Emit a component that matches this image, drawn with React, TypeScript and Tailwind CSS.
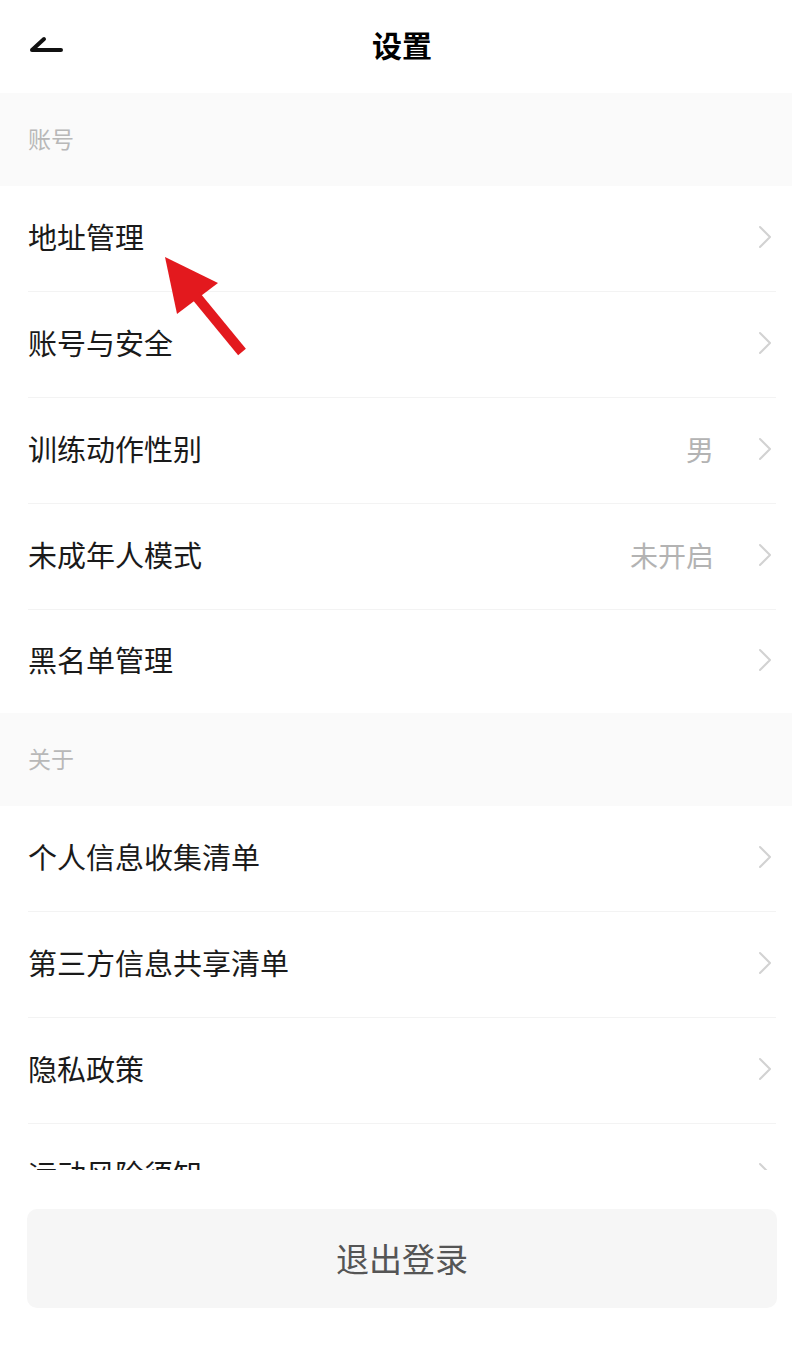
import React from 'react';

type Row = { label: string; value?: string };

const accountRows: Row[] = [
  { label: '地址管理' },
  { label: '账号与安全' },
  { label: '训练动作性别', value: '男' },
  { label: '未成年人模式', value: '未开启' },
  { label: '黑名单管理' },
];

const aboutRows: Row[] = [
  { label: '个人信息收集清单' },
  { label: '第三方信息共享清单' },
  { label: '隐私政策' },
  { label: '运动风险须知' },
];

const Chevron = () => (
  <svg width="14" height="24" viewBox="0 0 14 24" fill="none">
    <path d="M2 2 L12 12 L2 22" stroke="#d2d2d2" strokeWidth="2" strokeLinecap="round" strokeLinejoin="round" />
  </svg>
);

const SectionTitle = ({ title }: { title: string }) => (
  <div className="h-[93px] bg-[#fafafa] flex items-center px-[28px]">
    <span className="text-[23px] text-[#b8b8b8] -mt-[2px]">{title}</span>
  </div>
);

const SettingRow = ({ row, last }: { row: Row; last?: boolean }) => (
  <div className="pl-[28px] pr-[16px] bg-white">
    <div className={`flex items-center ${last ? 'h-[103px]' : 'h-[106px] border-b border-[#f3f3f3]'}`}>
      <span className="flex-1 text-[29px] text-[#1a1a1a] -mt-[3px]">{row.label}</span>
      {row.value && <span className="text-[28px] text-[#b3b3b3] mr-[44px] -mt-[3px]">{row.value}</span>}
      <div className="w-[14px] mr-[4px] flex items-center -mt-[3px]">
        <Chevron />
      </div>
    </div>
  </div>
);

export default function App() {
  return (
    <div
      className="w-[792px] h-[1359px] bg-white flex flex-col relative overflow-hidden"
      style={{ fontFamily: '"Noto Sans CJK SC", "Noto Sans", sans-serif' }}
    >
      <header className="h-[93px] grid grid-cols-[1fr_auto_1fr] items-center px-[28px]">
        <div className="-mt-[4px]">
          <svg width="36" height="20" viewBox="0 0 36 20" fill="none">
            <path d="M4 15 L16 4 M4 15 L33 15" stroke="#111" strokeWidth="4" strokeLinecap="round" />
          </svg>
        </div>
        <h1 className="text-[30px] font-bold text-black ml-[12px] -mt-[5px]">设置</h1>
        <div />
      </header>

      <div className="h-[1077px] overflow-hidden">
        <SectionTitle title="账号" />
        {accountRows.map((r, i) => (
          <SettingRow key={r.label} row={r} last={i === accountRows.length - 1} />
        ))}
        <SectionTitle title="关于" />
        {aboutRows.map((r, i) => (
          <SettingRow key={r.label} row={r} last={i === aboutRows.length - 1} />
        ))}
      </div>

      <div className="pt-[39px] pl-[27px] pr-[15px]">
        <button className="w-full h-[99px] rounded-[10px] bg-[#f6f6f6] flex items-center justify-center text-[33px] text-[#555555]">
          退出登录
        </button>
      </div>

      <svg className="absolute left-0 top-0 pointer-events-none" width="792" height="400" viewBox="0 0 792 400">
        <polygon points="165,257 218,283 177,314" fill="#e3191e" />
        <line x1="196" y1="296" x2="242" y2="352" stroke="#e3191e" strokeWidth="10" />
      </svg>
    </div>
  );
}
